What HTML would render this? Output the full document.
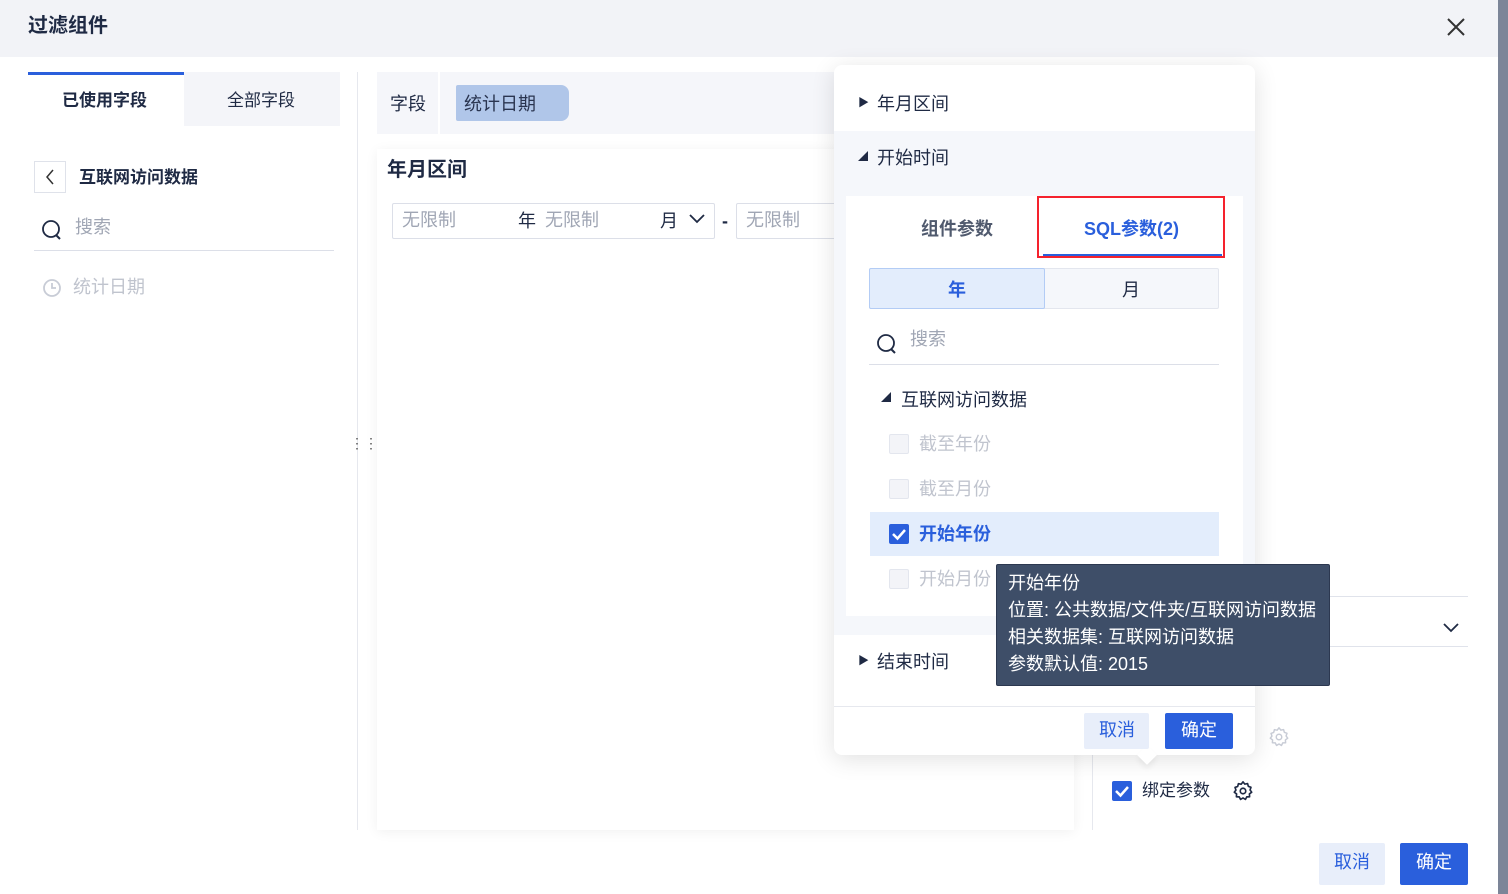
<!DOCTYPE html>
<html><head><meta charset="utf-8"><style>
*{box-sizing:border-box;margin:0;padding:0}
body{width:1508px;height:894px;position:relative;overflow:hidden;background:#fff;font-family:"Liberation Sans","Noto Sans CJK SC",sans-serif;color:#1f2a44;font-size:18px}
.a{position:absolute}
.t{position:absolute;white-space:nowrap;line-height:1}
.gear{position:absolute}
</style></head><body>
<div class="a" style="left:0;top:0;width:1498px;height:57px;background:#f2f3f7"></div>
<div class="t" style="left:28px;top:16px;font-size:20px;font-weight:bold;color:#1f2a44">过滤组件</div>
<svg class="a" style="left:1447px;top:18px" width="18" height="18"><path d="M1 1L17 17M17 1L1 17" stroke="#333" stroke-width="2"/></svg>
<div class="a" style="left:1498px;top:0;width:10px;height:894px;background:#7c8598"></div>

<!-- left -->
<div class="a" style="left:28px;top:72px;width:156px;height:54px;background:#fff;border-top:3px solid #2a5fdc"></div>
<div class="t" style="left:62px;top:92px;font-weight:bold;font-size:17px">已使用字段</div>
<div class="a" style="left:184px;top:72px;width:156px;height:54px;background:#f4f5f9"></div>
<div class="t" style="left:227px;top:92px;font-size:17px">全部字段</div>
<div class="a" style="left:34px;top:161px;width:32px;height:32px;border:1px solid #dfe2ea"></div>
<svg class="a" style="left:44px;top:168px" width="12" height="18"><path d="M9 2L3 9L9 16" stroke="#333" stroke-width="1.5" fill="none"/></svg>
<div class="t" style="left:79px;top:169px;font-weight:bold;font-size:17px">互联网访问数据</div>
<svg class="a" style="left:40px;top:218px" width="24" height="24"><circle cx="11" cy="11" r="8" stroke="#1f2a44" stroke-width="1.8" fill="none"/><path d="M16 17L20 21" stroke="#1f2a44" stroke-width="2"/></svg>
<div class="t" style="left:75px;top:218px;color:#a0a6b4">搜索</div>
<div class="a" style="left:34px;top:250px;width:300px;height:1px;background:#dcdfe8"></div>
<svg class="a" style="left:42px;top:278px" width="20" height="20"><circle cx="10" cy="10" r="8" stroke="#c8ccd6" stroke-width="1.8" fill="none"/><path d="M10 5V10H14" stroke="#c8ccd6" stroke-width="1.8" fill="none"/></svg>
<div class="t" style="left:73px;top:278px;color:#c0c4ce">统计日期</div>
<div class="a" style="left:357px;top:72px;width:1px;height:758px;background:#e6e8ee"></div>
<div class="t" style="left:350px;top:440px;color:#555;font-size:14px;line-height:7px">⋮⋮</div>

<!-- middle -->
<div class="a" style="left:377px;top:72px;width:460px;height:62px;background:#f5f6fa"></div>
<div class="t" style="left:390px;top:95px">字段</div>
<div class="a" style="left:438px;top:72px;width:2px;height:62px;background:#fff"></div>
<div class="a" style="left:456px;top:85px;width:113px;height:36px;background:#b0c6e9;border-radius:2px 8px 8px 2px"></div>
<div class="t" style="left:464px;top:95px;color:#2a3550">统计日期</div>
<div class="a" style="left:377px;top:149px;width:697px;height:681px;background:#fff;box-shadow:0 2px 12px rgba(0,0,0,.06)"></div>
<div class="t" style="left:387px;top:160px;font-size:20px;font-weight:bold">年月区间</div>
<div class="a" style="left:392px;top:203px;width:323px;height:36px;border:1px solid #dcdfe8;border-radius:2px"></div>
<div class="t" style="left:402px;top:211px;color:#a0a6b4">无限制</div>
<div class="t" style="left:518px;top:212px">年</div>
<div class="t" style="left:545px;top:211px;color:#a0a6b4">无限制</div>
<div class="t" style="left:660px;top:212px">月</div>
<svg class="a" style="left:688px;top:213px" width="18" height="12"><path d="M2 2L9 9L16 2" stroke="#1f2a44" stroke-width="1.8" fill="none"/></svg>
<div class="t" style="left:722px;top:212px;font-weight:bold">-</div>
<div class="a" style="left:736px;top:203px;width:110px;height:36px;border:1px solid #dcdfe8;border-radius:2px"></div>
<div class="t" style="left:746px;top:211px;color:#a0a6b4">无限制</div>

<!-- right -->
<div class="a" style="left:1092px;top:640px;width:1px;height:190px;background:#e6e8ee"></div>
<div class="a" style="left:1092px;top:596px;width:376px;height:1px;background:#e0e3eb"></div>
<div class="a" style="left:1092px;top:646px;width:376px;height:1px;background:#e0e3eb"></div>
<svg class="a" style="left:1442px;top:622px" width="18" height="12"><path d="M2 2L9 9L16 2" stroke="#1f2a44" stroke-width="1.8" fill="none"/></svg>
<svg class="gear" style="left:1268px;top:726px" width="22" height="22" viewBox="0 0 24 24"><path d="M12 2l2 2.5 3-.6.8 3 2.9 1.1-1 2.9 1.8 2.4-2.5 1.9.2 3.1-3.1.1-1.4 2.8L12 19.6 9.3 21.2l-1.4-2.8-3.1-.1.2-3.1L2.5 13.3 4.3 11l-1-2.9 2.9-1.1.8-3 3 .6z" fill="none" stroke="#c8ccd6" stroke-width="1.6" stroke-linejoin="round"/><circle cx="12" cy="12" r="3" fill="none" stroke="#c8ccd6" stroke-width="1.6"/></svg>
<div class="a" style="left:1112px;top:781px;width:20px;height:20px;background:#2a5fdc;border-radius:2px"></div>
<svg class="a" style="left:1112px;top:781px" width="20" height="20"><path d="M4 10L8.5 14.5L16 6" stroke="#fff" stroke-width="2.5" fill="none"/></svg>
<div class="t" style="left:1142px;top:782px;font-size:17px">绑定参数</div>
<svg class="gear" style="left:1232px;top:780px" width="22" height="22" viewBox="0 0 24 24"><path d="M12 2l2 2.5 3-.6.8 3 2.9 1.1-1 2.9 1.8 2.4-2.5 1.9.2 3.1-3.1.1-1.4 2.8L12 19.6 9.3 21.2l-1.4-2.8-3.1-.1.2-3.1L2.5 13.3 4.3 11l-1-2.9 2.9-1.1.8-3 3 .6z" fill="none" stroke="#1f2a44" stroke-width="1.8" stroke-linejoin="round"/><circle cx="12" cy="12" r="3" fill="none" stroke="#1f2a44" stroke-width="1.8"/></svg>
<div class="a" style="left:1319px;top:843px;width:66px;height:42px;background:#e8eefa;border-radius:2px"></div>
<div class="t" style="left:1334px;top:853px;color:#2a5fdc">取消</div>
<div class="a" style="left:1400px;top:843px;width:68px;height:42px;background:#2a5fdc;border-radius:2px"></div>
<div class="t" style="left:1416px;top:853px;color:#fff">确定</div>

<!-- popup -->
<div class="a" style="left:834px;top:65px;width:421px;height:690px;background:#fff;border-radius:8px;box-shadow:0 4px 24px rgba(0,0,0,.12)"></div>
<div class="a" style="left:1140px;top:748px;width:14px;height:14px;background:#fff;transform:rotate(45deg);box-shadow:3px 3px 6px rgba(0,0,0,.06)"></div>
<div class="t" style="left:858px;top:98px;font-size:11px">▶</div>
<div class="t" style="left:877px;top:95px">年月区间</div>
<div class="a" style="left:834px;top:131px;width:421px;height:504px;background:#f5f7fb"></div>
<div class="t" style="left:858px;top:153px;font-size:10px">◢</div>
<div class="t" style="left:877px;top:149px">开始时间</div>
<div class="a" style="left:846px;top:196px;width:397px;height:420px;background:#fff"></div>
<div class="t" style="left:921px;top:220px;font-weight:bold;color:#505a6e">组件参数</div>
<div class="t" style="left:1084px;top:220px;font-weight:bold;color:#2a5fdc">SQL参数(2)</div>
<div class="a" style="left:1043px;top:254px;width:179px;height:3px;background:#2a5fdc"></div>
<div class="a" style="left:1037px;top:196px;width:188px;height:62px;border:2px solid #f5222d"></div>
<div class="a" style="left:869px;top:268px;width:350px;height:41px;border:1px solid #e3e6ee;background:#f5f7fb;border-radius:2px"></div>
<div class="a" style="left:869px;top:268px;width:176px;height:41px;border:1px solid #b3ccf5;background:#e3edfc;border-radius:2px"></div>
<div class="t" style="left:948px;top:281px;font-weight:bold;color:#2a5fdc">年</div>
<div class="t" style="left:1122px;top:281px">月</div>
<svg class="a" style="left:875px;top:332px" width="24" height="24"><circle cx="11" cy="11" r="8" stroke="#1f2a44" stroke-width="1.8" fill="none"/><path d="M16 17L20 21" stroke="#1f2a44" stroke-width="2"/></svg>
<div class="t" style="left:910px;top:330px;color:#a0a6b4">搜索</div>
<div class="a" style="left:869px;top:364px;width:350px;height:1px;background:#dcdfe8"></div>
<div class="t" style="left:881px;top:394px;font-size:10px">◢</div>
<div class="t" style="left:901px;top:391px">互联网访问数据</div>
<div class="a" style="left:889px;top:434px;width:20px;height:20px;border:1px solid #e3e6ee;background:#f3f4f8;border-radius:2px"></div>
<div class="t" style="left:919px;top:435px;color:#c0c4ce">截至年份</div>
<div class="a" style="left:889px;top:479px;width:20px;height:20px;border:1px solid #e3e6ee;background:#f3f4f8;border-radius:2px"></div>
<div class="t" style="left:919px;top:480px;color:#c0c4ce">截至月份</div>
<div class="a" style="left:870px;top:512px;width:349px;height:44px;background:#e3edfc"></div>
<div class="a" style="left:889px;top:524px;width:20px;height:20px;background:#2a5fdc;border-radius:2px"></div>
<svg class="a" style="left:889px;top:524px" width="20" height="20"><path d="M4 10L8.5 14.5L16 6" stroke="#fff" stroke-width="2.5" fill="none"/></svg>
<div class="t" style="left:919px;top:525px;font-weight:bold;color:#2a5fdc">开始年份</div>
<div class="a" style="left:889px;top:569px;width:20px;height:20px;border:1px solid #e3e6ee;background:#f3f4f8;border-radius:2px"></div>
<div class="t" style="left:919px;top:570px;color:#c0c4ce">开始月份</div>
<div class="t" style="left:858px;top:656px;font-size:11px">▶</div>
<div class="t" style="left:877px;top:653px">结束时间</div>
<div class="a" style="left:834px;top:706px;width:421px;height:1px;background:#e6e8ee"></div>
<div class="a" style="left:1084px;top:713px;width:65px;height:36px;background:#e8eefa;border-radius:2px"></div>
<div class="t" style="left:1099px;top:721px;color:#2a5fdc">取消</div>
<div class="a" style="left:1165px;top:713px;width:68px;height:36px;background:#2a5fdc;border-radius:2px"></div>
<div class="t" style="left:1181px;top:721px;color:#fff">确定</div>

<!-- tooltip -->
<div class="a" style="left:996px;top:564px;width:334px;height:122px;background:#3e4e68;border:1px solid #2c3850;border-radius:2px"></div>
<div class="t" style="left:1008px;top:574px;color:#fff">开始年份</div>
<div class="t" style="left:1008px;top:601px;color:#fff">位置: 公共数据/文件夹/互联网访问数据</div>
<div class="t" style="left:1008px;top:628px;color:#fff">相关数据集: 互联网访问数据</div>
<div class="t" style="left:1008px;top:655px;color:#fff">参数默认值: 2015</div>
</body></html>
